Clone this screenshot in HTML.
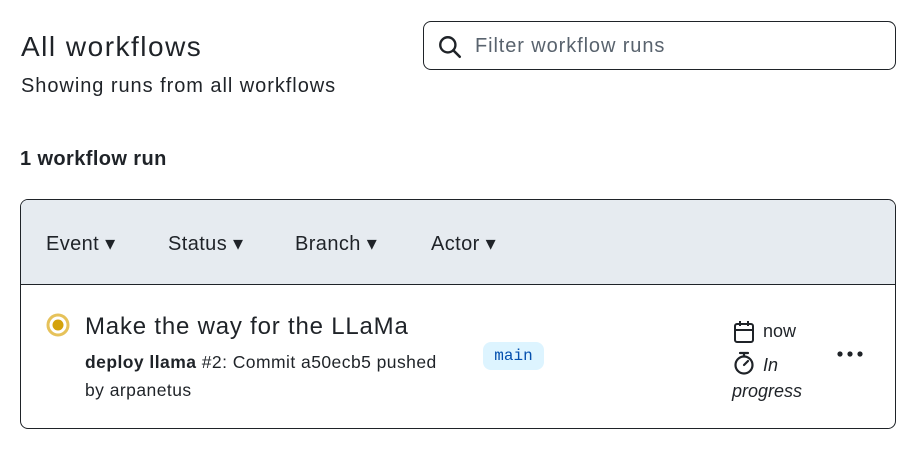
<!DOCTYPE html>
<html><head><meta charset="utf-8"><style>
body{margin:0;width:916px;height:456px;background:#fff;font-family:"Liberation Sans",sans-serif;color:#1f2328;position:relative;overflow:hidden}
.a{position:absolute}
</style></head><body>
<div class="a" style="left:21px;top:31px;font-size:28px;letter-spacing:1.5px;">All workflows</div>
<div class="a" style="left:21px;top:75px;font-size:20px;letter-spacing:0.95px;">Showing runs from all workflows</div>
<div class="a" style="left:423px;top:21px;width:471px;height:47px;border:1px solid #1f2328;border-radius:8px;"></div>
<svg class="a" style="left:437px;top:34px" width="26" height="26" viewBox="0 0 24 24"><circle cx="10" cy="10" r="7" fill="none" stroke="#1f2328" stroke-width="2.2"/><path d="M15 15l6 6" stroke="#1f2328" stroke-width="2.4" stroke-linecap="round"/></svg>
<div class="a" style="left:475px;top:35px;font-size:20px;color:#59636e;letter-spacing:0.9px;">Filter workflow runs</div>
<div class="a" style="left:20px;top:148px;font-size:20px;font-weight:bold;letter-spacing:0.4px;">1 workflow run</div>
<div class="a" style="left:20px;top:199px;width:874px;height:228px;border:1px solid #1f2328;border-radius:8px;overflow:hidden;">
 <div style="height:84px;background:#e6ebf0;border-bottom:1px solid #1f2328;position:relative;font-size:20px;letter-spacing:0.4px;">
  <span class="a" style="left:25px;top:31px">Event ▾</span>
  <span class="a" style="left:147px;top:31px">Status ▾</span>
  <span class="a" style="left:274px;top:31px">Branch ▾</span>
  <span class="a" style="left:410px;top:31px">Actor ▾</span>
 </div>
</div>
<svg class="a" style="left:46px;top:313px" width="24" height="24" viewBox="0 0 24 24"><circle cx="12" cy="12" r="10" fill="none" stroke="#e6c25a" stroke-width="3"/><circle cx="12" cy="12" r="5.5" fill="#d4a20c"/></svg>
<div class="a" style="left:85px;top:313px;font-size:24px;letter-spacing:0.8px;">Make the way for the LLaMa</div>
<div class="a" style="left:85px;top:348px;font-size:17.5px;line-height:28px;width:380px;letter-spacing:0.45px;"><b>deploy llama</b> #2: Commit a50ecb5 pushed<br>by arpanetus</div>
<div class="a" style="left:483px;top:342px;width:61px;height:28px;background:#ddf4ff;border-radius:8px;font-family:'Liberation Mono',monospace;font-size:16px;color:#0550ae;text-align:center;line-height:28px;">main</div>
<svg class="a" style="left:733px;top:320px" width="22" height="24" viewBox="0 0 22 24"><rect x="2" y="4" width="18" height="18" rx="2" fill="none" stroke="#1f2328" stroke-width="2"/><path d="M2 10h18M7 1v5M15 1v5" stroke="#1f2328" stroke-width="2"/></svg>
<div class="a" style="left:763px;top:321px;font-size:18px;">now</div>
<svg class="a" style="left:733px;top:350px" width="22" height="26" viewBox="0 0 22 26"><circle cx="11" cy="15" r="8.5" fill="none" stroke="#1f2328" stroke-width="2.2"/><path d="M7 3h8M11 3v3M11 15l4-4" stroke="#1f2328" stroke-width="2.2" stroke-linecap="round"/></svg>
<div class="a" style="left:732px;top:352px;font-size:18px;font-style:italic;line-height:26px;width:80px;text-indent:31px;">In<br><span>progress</span></div>
<svg class="a" style="left:836px;top:350px" width="28" height="8" viewBox="0 0 28 8"><circle cx="4" cy="4" r="2.6" fill="#1f2328"/><circle cx="14" cy="4" r="2.6" fill="#1f2328"/><circle cx="24" cy="4" r="2.6" fill="#1f2328"/></svg>
</body></html>
